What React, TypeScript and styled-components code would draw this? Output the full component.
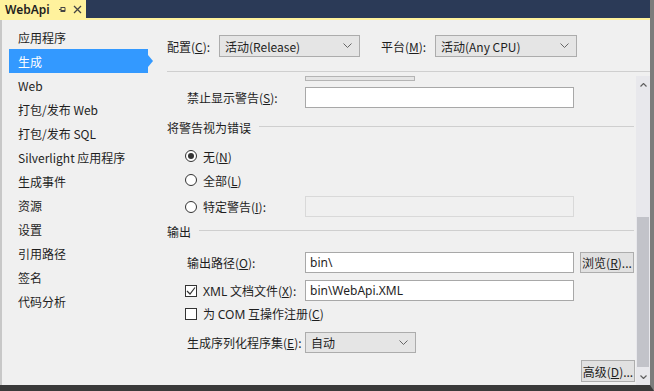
import React from "react";
import styled, { createGlobalStyle } from "styled-components";

const Global = createGlobalStyle`
  html, body { margin: 0; padding: 0; background: #f0f0f0; }
  body { font-family: "Noto Sans CJK SC", "Noto Sans", sans-serif; font-size: 12px; color: #1e1e1e; }
  * { box-sizing: border-box; }
`;

const Shell = styled.div`
  width: 654px;
  height: 391px;
  display: flex;
  flex-direction: column;
  overflow: hidden;
  background: #f0f0f0;
  border-right: 4px solid #7c7c7c;
  border-bottom: 6px solid #3a3a3a;
`;

const TabStrip = styled.div`
  height: 18px;
  background: #2b3a57;
  display: flex;
  flex-shrink: 0;
`;

const Tab = styled.div`
  width: 86px;
  height: 18px;
  background: #fff29d;
  display: flex;
  align-items: center;
  padding-left: 5px;
  font-family: "Noto Sans", sans-serif;
  font-size: 12px;
  font-weight: 600;
  color: #1e1e1e;
`;

const TabTitle = styled.span`
  margin-right: 8px;
`;

const TabIcon = styled.span`
  display: flex;
  align-items: center;
  margin-right: 6px;
`;

const YellowLine = styled.div`
  height: 2px;
  background: #fff29d;
  flex-shrink: 0;
`;

const Body = styled.div`
  flex: 1;
  display: flex;
  min-height: 0;
  border-left: 2px solid #c8c8c8;
`;

const Sidebar = styled.div`
  width: 158px;
  padding: 5px 0 0 7px;
  flex-shrink: 0;
`;

const NavItem = styled.div<{ $active?: boolean }>`
  position: relative;
  height: 24px;
  width: 139px;
  display: flex;
  align-items: center;
  padding-left: 9px;
  background: ${(p) => (p.$active ? "#3399ff" : "transparent")};
  color: ${(p) => (p.$active ? "#ffffff" : "#1e1e1e")};
  &::after {
    content: "";
    display: ${(p) => (p.$active ? "block" : "none")};
    position: absolute;
    right: -5px;
    top: 6px;
    border-left: 5px solid #3399ff;
    border-top: 6px solid transparent;
    border-bottom: 6px solid transparent;
  }
`;

const Main = styled.div`
  flex: 1;
  display: flex;
  flex-direction: column;
  padding-left: 7px;
  min-width: 0;
`;

const ConfigRow = styled.div`
  margin-top: 15px;
  height: 22px;
  display: flex;
  align-items: center;
`;

const Label = styled.span<{ $w?: number; $indent?: number }>`
  width: ${(p) => (p.$w ? `${p.$w}px` : "auto")};
  padding-left: ${(p) => p.$indent ?? 0}px;
  flex-shrink: 0;
  white-space: nowrap;
`;

const SelectBox = styled.div<{ $w: number; $h?: number }>`
  width: ${(p) => p.$w}px;
  height: ${(p) => p.$h ?? 22}px;
  background: #e5e5e5;
  border: 1px solid #acacac;
  display: flex;
  align-items: center;
  justify-content: space-between;
  padding: 0 7px 0 5px;
  flex-shrink: 0;
`;

const Spacer = styled.div<{ $w: number }>`
  width: ${(p) => p.$w}px;
  flex-shrink: 0;
`;

const Divider = styled.div`
  margin-top: 14px;
  height: 1px;
  background: #cfcfcf;
  flex-shrink: 0;
`;

const ScrollArea = styled.div`
  flex: 1;
  display: flex;
  min-height: 0;
  overflow: hidden;
`;

const Content = styled.div`
  flex: 1;
  display: flex;
  flex-direction: column;
  min-width: 0;
`;

const CutBox = styled.div`
  margin: 4px 0 0 138px;
  width: 110px;
  height: 5px;
  background: #e5e5e5;
  border: 1px solid #b4b4b4;
`;

const Row = styled.div<{ $mt: number; $h: number }>`
  margin-top: ${(p) => p.$mt}px;
  height: ${(p) => p.$h}px;
  display: flex;
  align-items: center;
  flex-shrink: 0;
`;

const TextBox = styled.div<{ $disabled?: boolean; $w?: number }>`
  width: ${(p) => p.$w ?? 269}px;
  height: 100%;
  background: ${(p) => (p.$disabled ? "#f0f0f0" : "#ffffff")};
  border: 1px solid ${(p) => (p.$disabled ? "#d9d9d9" : "#a8a8a8")};
  display: flex;
  align-items: center;
  padding-left: 4px;
  font-family: "Noto Sans", sans-serif;
  flex-shrink: 0;
`;

const GroupHeader = styled.div<{ $mt: number }>`
  margin-top: ${(p) => p.$mt}px;
  height: 16px;
  display: flex;
  align-items: center;
  padding-right: 2px;
  flex-shrink: 0;
`;

const GroupLine = styled.div`
  flex: 1;
  height: 1px;
  background: #cfcfcf;
  margin-left: 8px;
  margin-top: -1px;
`;

const Radio = styled.span<{ $checked?: boolean }>`
  width: 12px;
  height: 12px;
  border-radius: 50%;
  border: 1px solid #333333;
  background: #ffffff;
  margin: 0 6px 0 18px;
  display: flex;
  align-items: center;
  justify-content: center;
  flex-shrink: 0;
  &::after {
    content: "";
    display: ${(p) => (p.$checked ? "block" : "none")};
    width: 6px;
    height: 6px;
    border-radius: 50%;
    background: #333333;
  }
`;

const Check = styled.span`
  width: 12px;
  height: 12px;
  border: 1px solid #333333;
  background: #ffffff;
  margin: 0 6px 0 18px;
  display: flex;
  align-items: center;
  justify-content: center;
  flex-shrink: 0;
`;

const Button = styled.div`
  width: 54px;
  height: 100%;
  margin-left: 6px;
  background: #e1e1e1;
  border: 1px solid #adadad;
  display: flex;
  align-items: center;
  justify-content: center;
  flex-shrink: 0;
`;

const ButtonRow = styled.div`
  margin-top: 7px;
  height: 22px;
  display: flex;
  justify-content: flex-end;
  padding-right: 1px;
  flex-shrink: 0;
`;

const Latin = styled.span`
  font-family: "Noto Sans", sans-serif;
`;

const Scrollbar = styled.div`
  width: 14px;
  flex-shrink: 0;
  display: flex;
  flex-direction: column;
  padding-top: 4px;
  background: #f0f0f0;
`;

const ScrollBtn = styled.div`
  height: 17px;
  display: flex;
  align-items: center;
  justify-content: center;
  flex-shrink: 0;
  background: #e8e8ec;
`;

const Track = styled.div`
  flex: 1;
  background: #e8e8ec;
  display: flex;
  flex-direction: column;
  align-items: center;
`;

const Thumb = styled.div`
  margin-top: 124px;
  width: 12px;
  height: 150px;
  background: #c2c3c9;
`;

const Chevron = () => (
  <svg width="9" height="6" viewBox="0 0 9 6">
    <polyline points="0.5,0.5 4.5,4.5 8.5,0.5" fill="none" stroke="#666" strokeWidth="1" />
  </svg>
);

const Arrow = ({ up }: { up?: boolean }) => (
  <svg width="7" height="4" viewBox="0 0 7 4">
    <polyline
      points={up ? "0.5,3.5 3.5,0.5 6.5,3.5" : "0.5,0.5 3.5,3.5 6.5,0.5"}
      fill="none"
      stroke="#606060"
      strokeWidth="1.2"
    />
  </svg>
);

const navItems = [
  "应用程序",
  "生成",
  "Web",
  "打包/发布 Web",
  "打包/发布 SQL",
  "Silverlight 应用程序",
  "生成事件",
  "资源",
  "设置",
  "引用路径",
  "签名",
  "代码分析",
];

export default function App() {
  return (
    <>
      <Global />
      <Shell>
        <TabStrip>
          <Tab>
            <TabTitle>WebApi</TabTitle>
            <TabIcon>
              <svg width="9" height="9" viewBox="0 0 9 9">
                <path d="M1 4.5 H3 M3 2 V7 M3 2.5 H7 V6.5 H3 M3 5.5 H7" fill="none" stroke="#444" strokeWidth="1" />
              </svg>
            </TabIcon>
            <TabIcon>
              <svg width="9" height="9" viewBox="0 0 9 9">
                <path d="M1 1 L8 8 M8 1 L1 8" stroke="#444" strokeWidth="1.3" />
              </svg>
            </TabIcon>
          </Tab>
        </TabStrip>
        <YellowLine />
        <Body>
          <Sidebar>
            {navItems.map((n) => (
              <NavItem key={n} $active={n === "生成"}>
                {n}
              </NavItem>
            ))}
          </Sidebar>
          <Main>
            <ConfigRow>
              <Label $w={52}>
                配置(<u>C</u>):
              </Label>
              <SelectBox $w={141}>
                <span>活动(Release)</span>
                <Chevron />
              </SelectBox>
              <Spacer $w={21} />
              <Label $w={54}>
                平台(<u>M</u>):
              </Label>
              <SelectBox $w={142}>
                <span>活动(Any CPU)</span>
                <Chevron />
              </SelectBox>
            </ConfigRow>
            <Divider />
            <ScrollArea>
              <Content>
                <CutBox />
                <Row $mt={6} $h={21}>
                  <Label $w={138} $indent={20}>
                    禁止显示警告(<u>S</u>):
                  </Label>
                  <TextBox />
                </Row>
                <GroupHeader $mt={11}>
                  <span>将警告视为错误</span>
                  <GroupLine />
                </GroupHeader>
                <Row $mt={9} $h={24}>
                  <Radio $checked />
                  <span>
                    无(<u>N</u>)
                  </span>
                </Row>
                <Row $mt={0} $h={24}>
                  <Radio />
                  <span>
                    全部(<u>L</u>)
                  </span>
                </Row>
                <Row $mt={4} $h={21}>
                  <Radio />
                  <Label $w={102}>
                    特定警告(<u>I</u>):
                  </Label>
                  <TextBox $disabled />
                </Row>
                <GroupHeader $mt={6}>
                  <span>输出</span>
                  <GroupLine />
                </GroupHeader>
                <Row $mt={13} $h={21}>
                  <Label $w={138} $indent={20}>
                    输出路径(<u>O</u>):
                  </Label>
                  <TextBox>bin\</TextBox>
                  <Button>
                    浏览(<u>R</u>)...
                  </Button>
                </Row>
                <Row $mt={7} $h={21}>
                  <Check>
                    <svg width="10" height="10" viewBox="0 0 10 10">
                      <polyline points="1,5 4,8 9,1.5" fill="none" stroke="#333" strokeWidth="1.2" />
                    </svg>
                  </Check>
                  <Label $w={102}>
                    <Latin>XML</Latin> 文档文件(<u>X</u>):
                  </Label>
                  <TextBox>bin\WebApi.XML</TextBox>
                </Row>
                <Row $mt={2} $h={22}>
                  <Check />
                  <span>
                    为 <Latin>COM</Latin> 互操作注册(<u>C</u>)
                  </span>
                </Row>
                <Row $mt={7} $h={21}>
                  <Label $w={138} $indent={20}>
                    生成序列化程序集(<u>E</u>):
                  </Label>
                  <SelectBox $w={111} $h={21}>
                    <span>自动</span>
                    <Chevron />
                  </SelectBox>
                </Row>
                <ButtonRow>
                  <Button>
                    高级(<u>D</u>)...
                  </Button>
                </ButtonRow>
              </Content>
              <Scrollbar>
                <ScrollBtn>
                  <Arrow up />
                </ScrollBtn>
                <Track>
                  <Thumb />
                </Track>
                <ScrollBtn>
                  <Arrow />
                </ScrollBtn>
              </Scrollbar>
            </ScrollArea>
          </Main>
        </Body>
      </Shell>
    </>
  );
}
